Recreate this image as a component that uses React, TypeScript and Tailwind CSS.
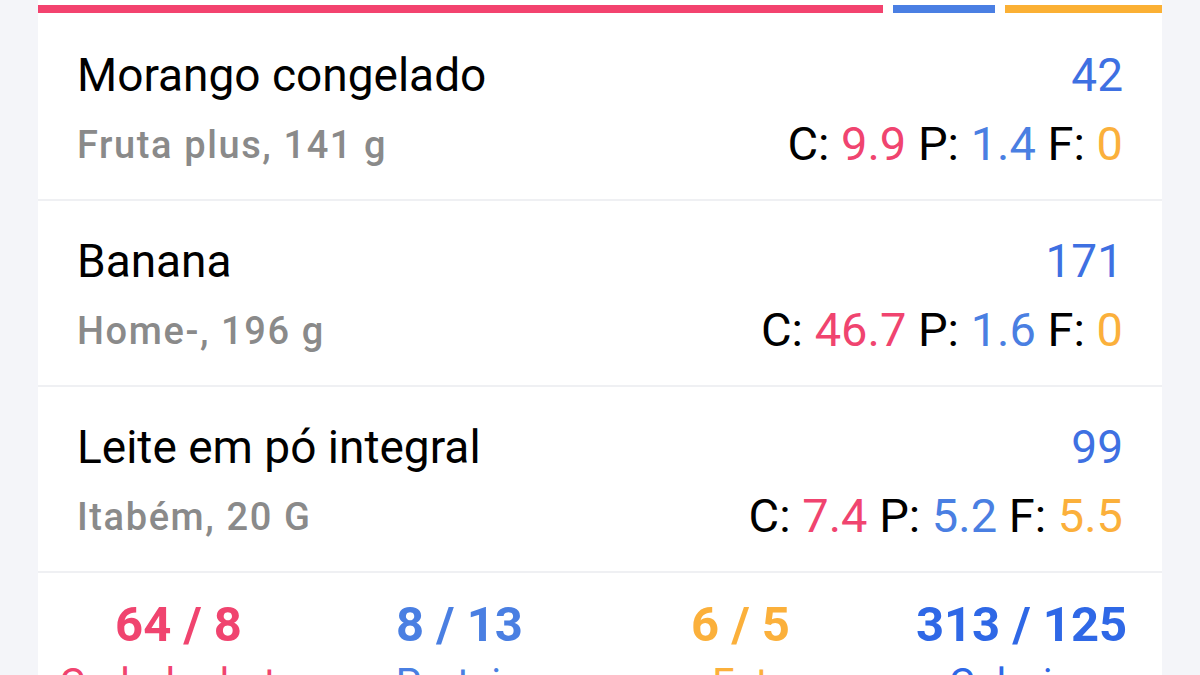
import React from "react";

const PINK = "text-[#f0446f]";
const BLUE = "text-[#4a7fe2]";
const YELLOW = "text-[#fbb03b]";

type Item = { name: string; sub: string; kcal: string; c: string; p: string; f: string };

const items: Item[] = [
  { name: "Morango congelado", sub: "Fruta plus, 141 g", kcal: "42", c: "9.9", p: "1.4", f: "0" },
  { name: "Banana", sub: "Home-, 196 g", kcal: "171", c: "46.7", p: "1.6", f: "0" },
  { name: "Leite em pó integral", sub: "Itabém, 20 G", kcal: "99", c: "7.4", p: "5.2", f: "5.5" },
];

function Row({ it }: { it: Item }) {
  return (
    <div className="flex justify-between pl-[39px] pr-[39px] pt-[33px] h-[186px] border-b-[2px] border-[#eff0f3]">
      <div className="flex flex-col">
        <div className="text-[46px] leading-[54px] text-black">{it.name}</div>
        <div className="text-[38px] leading-[46px] mt-[20px] font-medium tracking-[1.6px] text-[#8a8a8a]">{it.sub}</div>
      </div>
      <div className="flex flex-col items-end">
        <div className="text-[46px] leading-[54px] text-[#3e70e2]">{it.kcal}</div>
        <div className="text-[47px] leading-[46px] mt-[19px] text-black whitespace-pre">
          C: <span className={PINK}>{it.c}</span> P: <span className={BLUE}>{it.p}</span> F: <span className={YELLOW}>{it.f}</span>
        </div>
      </div>
    </div>
  );
}

function Stat({ value, label, color }: { value: string; label: string; color: string }) {
  return (
    <div className="flex flex-col items-center">
      <div className={`text-[49px] leading-[56px] font-bold ${color}`}>{value}</div>
      <div className={`text-[40px] leading-[48px] mt-[7px] ${color}`}>{label}</div>
    </div>
  );
}

export default function App() {
  return (
    <div className="w-[1200px] h-[675px] overflow-hidden bg-[#f4f5f9] px-[38px]" style={{ fontFamily: "Roboto, 'Noto Sans', sans-serif" }}>
      <div className="w-[1124px] bg-white h-full">
        <div className="flex gap-[10px] pt-[5px] h-[15px]">
          <div className="h-[8px] bg-[#f3436f] w-[845px]" />
          <div className="h-[8px] bg-[#4a7fe3] w-[102px]" />
          <div className="h-[8px] bg-[#fbb034] flex-1" />
        </div>
        {items.map((it) => (
          <Row key={it.name} it={it} />
        ))}
        <div className="grid grid-cols-4 pt-[24px]">
          <Stat value="64 / 8" label="Carbohydrate" color="text-[#f0446f]" />
          <Stat value="8 / 13" label="Protein" color="text-[#4a7fe2]" />
          <Stat value="6 / 5" label="Fat" color="text-[#fbb03b]" />
          <Stat value="313 / 125" label="Calories" color="text-[#2f68e6]" />
        </div>
      </div>
    </div>
  );
}
